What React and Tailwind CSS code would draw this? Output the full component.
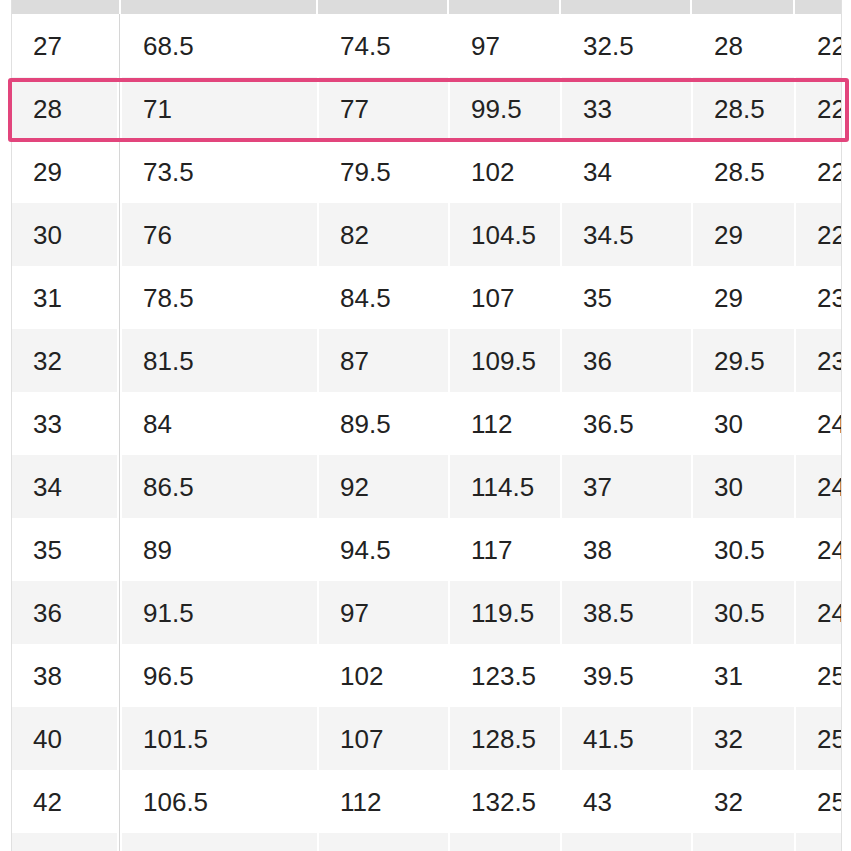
import React from "react";

const rows = [
  ["27", "68.5", "74.5", "97", "32.5", "28", "22"],
  ["28", "71", "77", "99.5", "33", "28.5", "22"],
  ["29", "73.5", "79.5", "102", "34", "28.5", "22"],
  ["30", "76", "82", "104.5", "34.5", "29", "22"],
  ["31", "78.5", "84.5", "107", "35", "29", "23"],
  ["32", "81.5", "87", "109.5", "36", "29.5", "23"],
  ["33", "84", "89.5", "112", "36.5", "30", "24"],
  ["34", "86.5", "92", "114.5", "37", "30", "24"],
  ["35", "89", "94.5", "117", "38", "30.5", "24"],
  ["36", "91.5", "97", "119.5", "38.5", "30.5", "24"],
  ["38", "96.5", "102", "123.5", "39.5", "31", "25"],
  ["40", "101.5", "107", "128.5", "41.5", "32", "25"],
  ["42", "106.5", "112", "132.5", "43", "32", "25"],
  ["44", "111.5", "117", "137.5", "44.5", "33", "26"],
];

// widths of the columns after the first one
const widths = ["w-[195px]", "w-[129px]", "w-[110px]", "w-[129px]", "w-[101px]", "w-[60px]"];
const gaps = ["mr-[2px]", "mr-[2px]", "mr-[2px]", "mr-[2px]", "mr-[2px]", ""];

const Row = ({ cells, gray }) => {
  const bg = gray ? "bg-[#f4f4f4]" : "bg-white";
  return (
    <div className="flex h-[63px] shrink-0">
      <div className={`flex w-[105px] shrink-0 items-center pl-[21px] pt-[2px] mr-[2px] ${bg}`}>
        {cells[0]}
      </div>
      <div className="flex border-l border-[#d6d6d6] pl-[2px]">
        {cells.slice(1).map((c, i) => (
          <div
            key={i}
            className={`flex shrink-0 items-center pl-[21px] pt-[2px] ${widths[i]} ${gaps[i]} ${bg}`}
          >
            {c}
          </div>
        ))}
      </div>
    </div>
  );
};

export default function App() {
  return (
    <div className="relative h-[851px] w-[851px] overflow-hidden bg-white">
      <div
        className="ml-[11px] w-[831px] overflow-hidden border-x border-[#e0e0e0] text-[26px] text-[#222]"
        style={{ fontFamily: '"Liberation Sans", Arial, sans-serif' }}
      >
        {/* header strip */}
        <div className="flex h-[14px]">
          <div className="w-[107px] shrink-0 bg-[#dcdcdc] mr-[2px]" />
          {widths.map((w, i) => (
            <div key={i} className={`shrink-0 bg-[#dcdcdc] ${w} ${gaps[i]}`} />
          ))}
        </div>
        {rows.map((r, i) => (
          <Row key={r[0]} cells={r} gray={i % 2 === 1} />
        ))}
      </div>
      {/* highlighted row frame */}
      <div className="pointer-events-none absolute left-[8px] top-[78px] h-[64px] w-[841px] rounded-[3px] border-4 border-[#e2457c]" />
    </div>
  );
}
